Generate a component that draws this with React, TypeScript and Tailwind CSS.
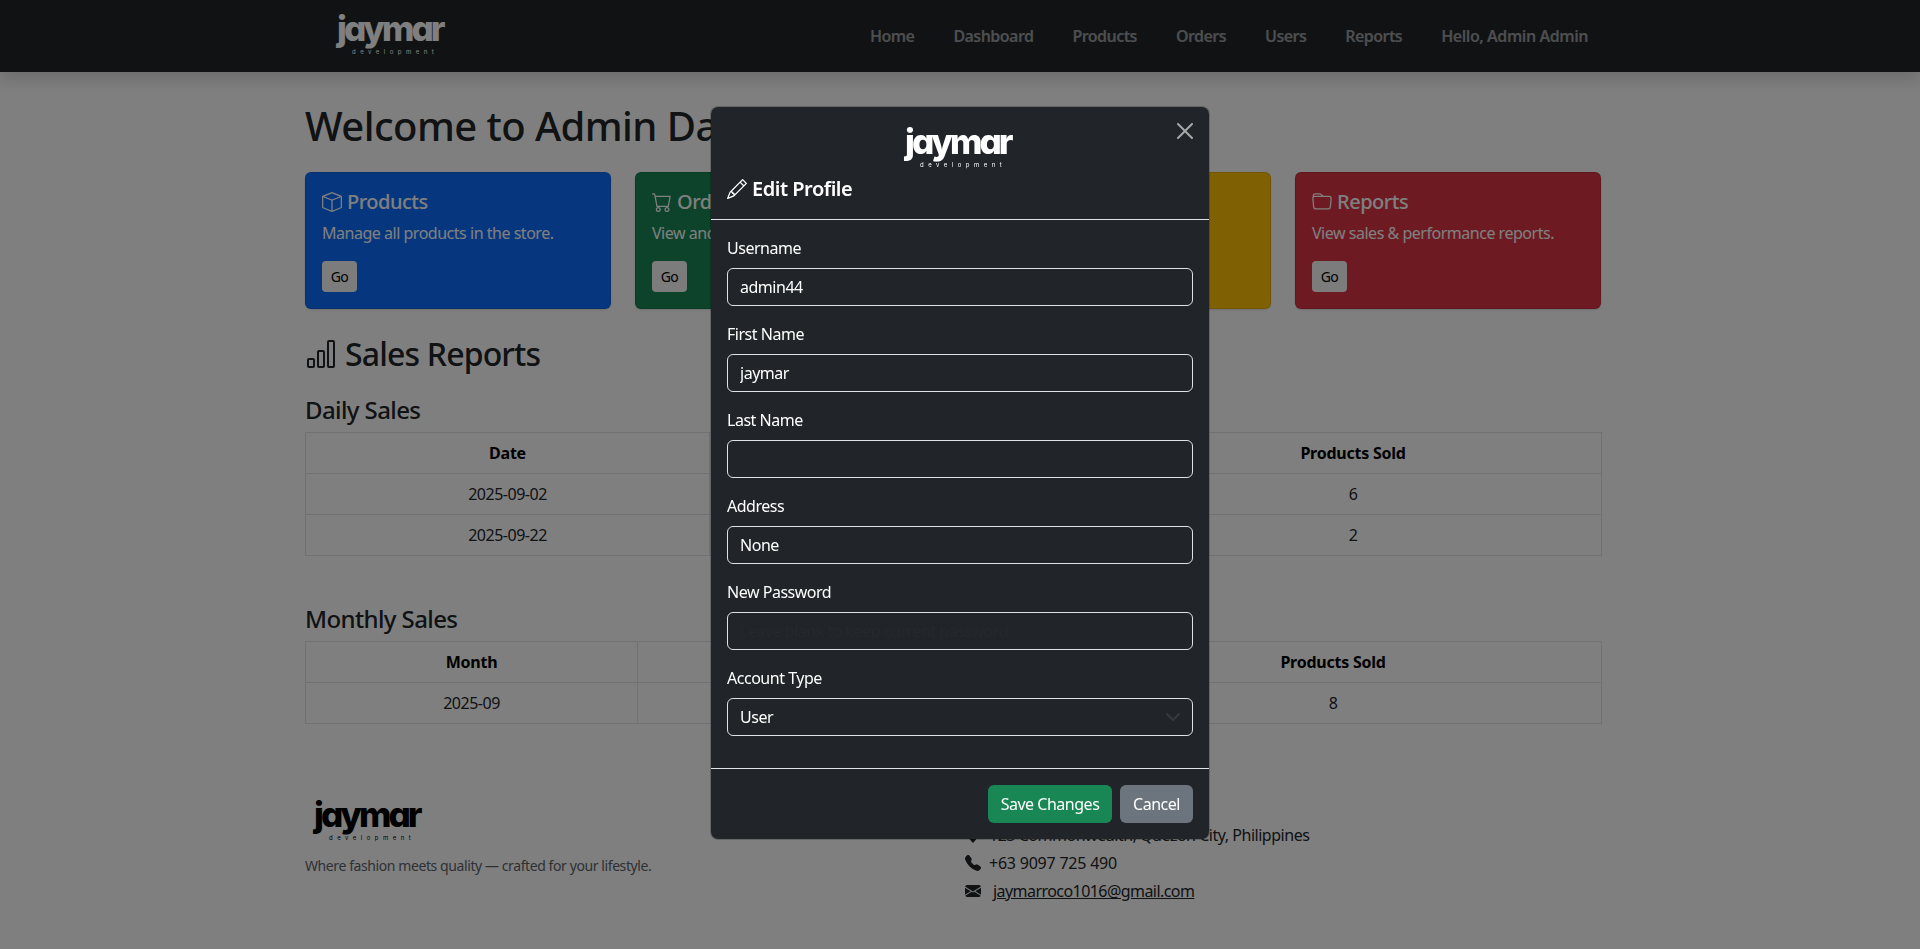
import React from "react";
import { BsBox, BsCart, BsFolder, BsBarChart, BsPencil, BsPeople, BsGeoAltFill, BsTelephoneFill, BsEnvelopeFill } from "react-icons/bs";

function Logo({ dark }: { dark?: boolean }) {
  const color = dark ? "text-black" : "text-white";
  return (
    <div className={`flex flex-col w-[110px] h-[52px] ${color}`}>
      <span className="font-['Inter',sans-serif] font-extrabold text-[35px] leading-[36px] tracking-[-0.085em] [font-feature-settings:'cv11']">jaymar</span>
      <span className="font-['Inter',sans-serif] text-[6px] leading-[6px] tracking-[0.75em] ml-[15px] mt-[3px] whitespace-nowrap">development</span>
    </div>
  );
}

function Card({ bg, icon, title, text }: { bg: string; icon: React.ReactNode; title: string; text: string }) {
  return (
    <div className={`${bg} h-[137px] rounded-[6px] border border-black/10 p-4 text-white shadow-sm`}>
      <h5 className="mt-[1px] mb-[7px] flex items-center gap-[5px] text-[20px] leading-[24px] font-medium">
        {icon}
        {title}
      </h5>
      <p className="text-[16px] leading-[24px] mb-4">{text}</p>
      <button className="block h-[31px] w-[35px] rounded-[4px] bg-[#f8f9fa] text-[14px] text-black">Go</button>
    </div>
  );
}

function SalesTable({ first, rows, widths }: { first: string; rows: string[][]; widths: string[] }) {
  const th = "h-[41px] border border-[#dee2e6] font-bold text-black tracking-[-0.015em]";
  return (
    <table className="w-full table-fixed border-collapse text-center text-[16px] text-[#212529]">
      <colgroup>
        {widths.map((w) => (
          <col key={w} className={w} />
        ))}
      </colgroup>
      <thead>
        <tr>
          <th className={th}>{first}</th>
          <th className={th}>Total Sales</th>
          <th className={th}>Products Sold</th>
        </tr>
      </thead>
      <tbody>
        {rows.map((r) => (
          <tr key={r[0]}>
            {r.map((c, i) => (
              <td key={i} className="h-[41px] border border-[#dee2e6]">{c}</td>
            ))}
          </tr>
        ))}
      </tbody>
    </table>
  );
}

function Field({ label, value, placeholder }: { label: string; value?: string; placeholder?: string }) {
  return (
    <div className="mb-4">
      <label className="block text-[16px] leading-[24px] mb-2 text-white">{label}</label>
      <input
        readOnly
        value={value ?? ""}
        placeholder={placeholder}
        className="block w-full h-[38px] rounded-[6px] border border-[#dee2e6] bg-[#212529] px-3 text-[16px] text-white outline-none placeholder:text-[#25292e]"
      />
    </div>
  );
}

export default function App() {
  return (
    <div className="relative h-[949px] overflow-hidden bg-white text-[#212529] font-['Noto_Sans',sans-serif] tracking-[-0.48px]">
      <nav className="relative flex h-[72px] items-center justify-between bg-[#212529] pl-[337px] pr-[332px] shadow-[0_8px_16px_rgba(0,0,0,0.15)]">
        <Logo />
        <div className="flex gap-[39px] text-[16px] font-semibold text-white/55 tracking-[-0.56px]">
          <span>Home</span>
          <span>Dashboard</span>
          <span>Products</span>
          <span>Orders</span>
          <span>Users</span>
          <span>Reports</span>
          <span className="tracking-[-0.45px]">Hello, Admin Admin</span>
        </div>
      </nav>

      <main className="mx-[305px] w-[1296px] pt-[30px]">
        <h1 className="text-[40px] leading-[48px] font-medium mb-[22px] tracking-[-0.56px]">Welcome to Admin Dashboard</h1>
        <div className="grid grid-cols-4 gap-6">
          <Card bg="bg-[#0d6efd]" icon={<BsBox className="size-5" />} title="Products" text="Manage all products in the store." />
          <Card bg="bg-[#198754]" icon={<BsCart className="size-5" />} title="Orders" text="View and manage orders." />
          <Card bg="bg-[#ffc107]" icon={<BsPeople className="size-5" />} title="Users" text="Manage user accounts." />
          <Card bg="bg-[#dc3545]" icon={<BsFolder className="size-5" />} title="Reports" text="View sales & performance reports." />
        </div>

        <h2 className="mt-[26px] flex items-center gap-2 text-[32px] leading-[38px] font-medium tracking-[-0.84px]">
          <BsBarChart className="size-8" />
          Sales Reports
        </h2>
        <h4 className="mt-[22px] mb-2 text-[24px] leading-[29px] font-medium tracking-[-0.6px]">Daily Sales</h4>
        <SalesTable
          first="Date"
          widths={["w-[404px]", "w-[395px]", "w-[497px]"]}
          rows={[
            ["2025-09-02", "₱1,200.00", "6"],
            ["2025-09-22", "₱400.00", "2"],
          ]}
        />
        <h4 className="mt-[48px] mb-2 text-[24px] leading-[29px] font-medium tracking-[-0.6px]">Monthly Sales</h4>
        <SalesTable
          first="Month"
          widths={["w-[332px]", "w-[427px]", "w-[537px]"]}
          rows={[["2025-09", "₱1,600.00", "8"]]}
        />

        <footer className="mt-[72px] grid grid-cols-2 gap-6">
          <div>
            <div className="ml-[9px] mb-[7px]">
              <Logo dark />
            </div>
            <p className="text-[14px] leading-[21px] text-[#5c636a] tracking-[-0.41px]">Where fashion meets quality — crafted for your lifestyle.</p>
          </div>
          <div className="pt-[27px] text-[16px] leading-[24px]">
            <div className="flex items-center gap-2 mb-1 tracking-[-0.48px]"><BsGeoAltFill className="size-4" />123 Commonwealth, Quezon City, Philippines</div>
            <div className="flex items-center gap-2 mb-1 tracking-[-0.22px]"><BsTelephoneFill className="size-4" />+63 9097 725 490</div>
            <div className="flex items-center gap-3 mb-1 tracking-[-0.56px]"><BsEnvelopeFill className="size-4" /><a className="underline">jaymarroco1016@gmail.com</a></div>
          </div>
        </footer>
      </main>

      <div className="fixed inset-0 bg-black/50" />

      <div className="fixed inset-0 flex justify-center pt-[106px]">
        <div className="h-[734px] w-[500px] rounded-[8px] border border-black/20 bg-[#212529] bg-clip-padding text-white">
          <div className="relative h-[113px] border-b border-[#dee2e6] px-4">
            <div className="flex justify-center pt-[16px]">
              <Logo />
            </div>
            <svg className="absolute right-[16px] top-[16px] size-4 fill-white/60" viewBox="0 0 16 16">
              <path d="M.293.293a1 1 0 0 1 1.414 0L8 6.586 14.293.293a1 1 0 1 1 1.414 1.414L9.414 8l6.293 6.293a1 1 0 0 1-1.414 1.414L8 9.414l-6.293 6.293a1 1 0 0 1-1.414-1.414L6.586 8 .293 1.707a1 1 0 0 1 0-1.414" />
            </svg>
            <h5 className="mt-[2px] flex items-center gap-[5px] text-[20px] leading-[24px] font-semibold">
              <BsPencil className="size-5" />
              Edit Profile
            </h5>
          </div>
          <div className="h-[549px] border-b border-[#dee2e6] px-4 pt-4">
            <Field label="Username" value="admin44" />
            <Field label="First Name" value="jaymar" />
            <Field label="Last Name" />
            <Field label="Address" value="None" />
            <Field label="New Password" placeholder="Leave blank to keep current password" />
            <div>
              <label className="block text-[16px] leading-[24px] mb-2">Account Type</label>
              <div className="relative">
                <select className="block w-full h-[38px] appearance-none rounded-[6px] border border-[#dee2e6] bg-[#212529] px-3 text-[16px] text-white outline-none">
                  <option>User</option>
                </select>
                <svg className="absolute right-3 top-[11px] size-4" viewBox="0 0 16 16" fill="none" stroke="#343a40" strokeWidth="2" strokeLinecap="round" strokeLinejoin="round">
                  <path d="m2 5 6 6 6-6" />
                </svg>
              </div>
            </div>
          </div>
          <div className="flex justify-end gap-2 px-4 pt-4">
            <button className="h-[38px] w-[124px] rounded-[6px] bg-[#198754] text-[16px] text-white">Save Changes</button>
            <button className="h-[38px] w-[73px] rounded-[6px] bg-[#6c757d] text-[16px] text-white">Cancel</button>
          </div>
        </div>
      </div>
    </div>
  );
}
